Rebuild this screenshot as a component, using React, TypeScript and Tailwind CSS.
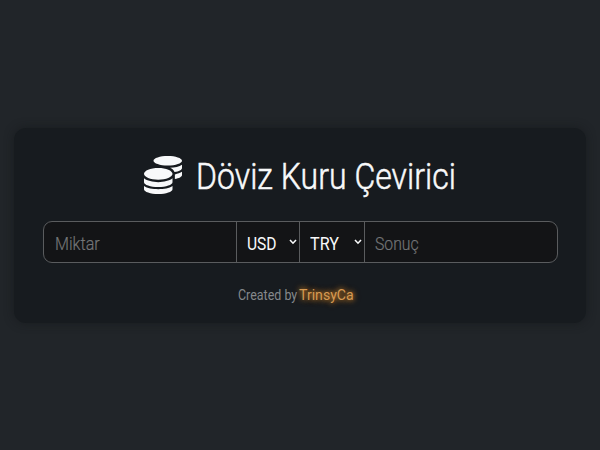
import React from 'react';
import { FaCoins } from 'react-icons/fa';

function Chevron() {
  return (
    <svg viewBox="0 0 8 6" className="h-[6px] w-[8px] shrink-0" fill="none" stroke="#f8f9fa" strokeWidth="1.6">
      <path d="M1 1 L4 4.2 L7 1" />
    </svg>
  );
}

function CurrencySelect({ code, size, scale }: { code: string; size: string; scale: string }) {
  return (
    <button className={`flex items-center justify-between border-l border-[#5a5c5e] pl-[10px] pr-[2px] text-[#f8f9fa] ${size}`}>
      <span className={`mt-[3px] inline-block w-0 origin-left whitespace-nowrap text-[19px] leading-none ${scale}`}>{code}</span>
      <Chevron />
    </button>
  );
}

export default function App() {
  return (
    <main className="flex h-[450px] w-[600px] items-start justify-center bg-[#212529] pt-[128px] font-['Roboto','Open_Sans',sans-serif]">
      <section className="h-[195px] w-[572px] rounded-[12px] bg-[#171b1f] px-[29px] pt-7 shadow-[0_0_10px_rgba(20,23,26,0.65)]">
        <h1 className="flex h-[38px] items-center pl-[101px] text-[#f8f9fa]">
          <FaCoins className="size-[38px] shrink-0" />
          <span className="ml-[14px] mt-[4px] inline-block origin-left scale-x-[0.89] whitespace-nowrap text-[36px] font-light leading-none [-webkit-text-stroke:0.5px_#f8f9fa]">
            Döviz Kuru Çevirici
          </span>
        </h1>

        <div className="mt-[27px] flex h-[42px] w-[515px] overflow-hidden rounded-[9px] border border-[#5a5c5e] bg-[#131416]">
          <div className="flex w-[192px] items-center pl-[11px] pt-[4px] text-[19px] font-light text-[#737577]">
            <span className="inline-block origin-left scale-x-[0.85] [-webkit-text-stroke:0.2px_#737577]">Miktar</span>
          </div>
          <CurrencySelect code="USD" size="w-[63px]" scale="scale-x-[0.82]" />
          <CurrencySelect code="TRY" size="w-[65px]" scale="scale-x-[0.85]" />
          <div className="flex flex-1 items-center border-l border-[#5a5c5e] pl-[10px] pt-[4px] text-[19px] font-light text-[#737577]">
            <span className="inline-block origin-left scale-x-[0.83] [-webkit-text-stroke:0.2px_#737577]">Sonuç</span>
          </div>
        </div>

        <p className="mt-[23px] flex h-[18px] items-center pl-[195px] leading-none text-[#85888b]">
          <span className="inline-block w-[61px] origin-left scale-x-[0.89] whitespace-nowrap text-[14px]">Created by</span>
          <span className="inline-block origin-left scale-x-[0.94] whitespace-nowrap text-[15px] text-[#d69a53] [text-shadow:0_0_5px_#c47c25,0_0_8px_#a96a20]">TrinsyCa</span>
        </p>
      </section>
    </main>
  );
}
